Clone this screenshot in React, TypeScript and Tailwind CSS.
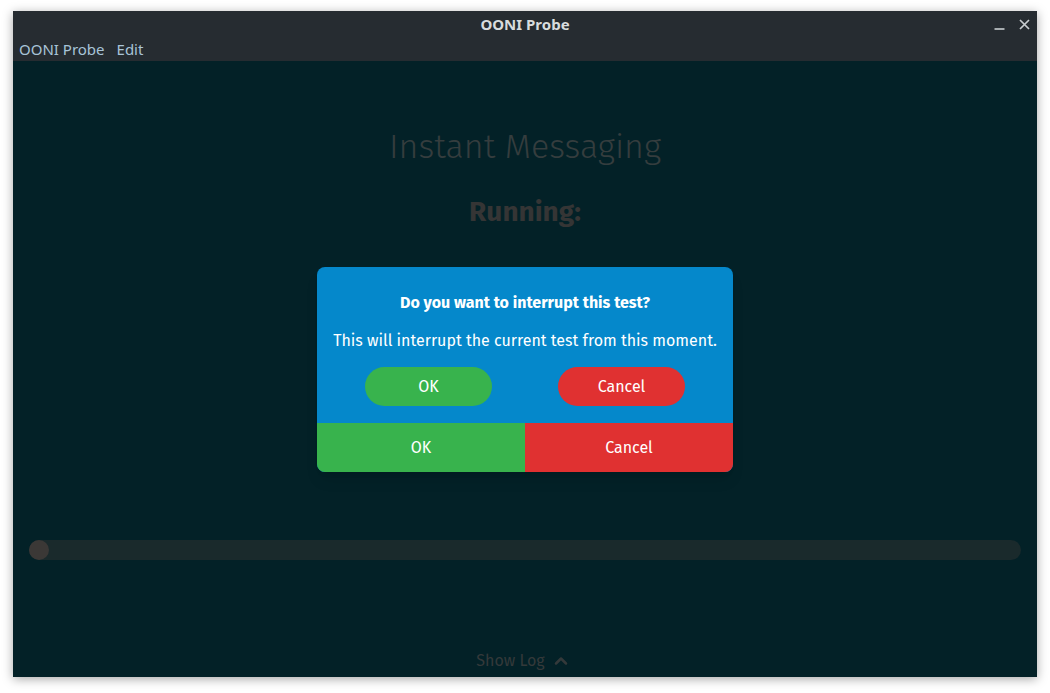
import { ChevronUp } from "lucide-react";

function TitleBar() {
  return (
    <div className="relative flex h-[26px] items-center justify-center bg-[#262c31]">
      <span className="text-[15px] font-bold text-[#d8dcde]" style={{ fontFamily: '"Noto Sans", sans-serif' }}>
        OONI Probe
      </span>
      <div className="absolute right-[7px] top-0 flex h-full items-center gap-[14px]">
        <svg width="11" height="11" viewBox="0 0 11 11">
          <path d="M0.5 10h10" stroke="#c8cdd0" strokeWidth="1.6" />
        </svg>
        <svg width="11" height="11" viewBox="0 0 11 11">
          <path d="M1 1l9 9M10 1l-9 9" stroke="#c8cdd0" strokeWidth="1.7" />
        </svg>
      </div>
    </div>
  );
}

function MenuBar() {
  return (
    <div
      className="flex h-[24px] items-center gap-[12px] bg-[#262c31] px-[6px] text-[15px] text-[#a8c4d8]"
      style={{ fontFamily: '"Noto Sans", sans-serif' }}
    >
      <span>OONI Probe</span>
      <span>Edit</span>
    </div>
  );
}

function Dialog() {
  return (
    <div className="absolute left-[304px] top-[206px] w-[416px] overflow-hidden rounded-[8px] bg-[#0588cb] shadow-lg">
      <div className="flex flex-col items-center pt-[24px]">
        <p className="text-[16px] font-bold text-white">Do you want to interrupt this test?</p>
        <p className="mt-[14px] text-[16px] text-white">
          This will interrupt the current test from this moment.
        </p>
        <div className="mt-[14px] mb-[17px] flex gap-[66px]">
          <button className="h-[39px] w-[127px] rounded-full bg-[#38b34d] text-[16px] text-white">OK</button>
          <button className="h-[39px] w-[127px] rounded-full bg-[#e03131] text-[16px] text-white">Cancel</button>
        </div>
      </div>
      <div className="flex h-[49px]">
        <button className="flex-1 bg-[#38b34d] text-[16px] text-white">OK</button>
        <button className="flex-1 bg-[#e03131] text-[16px] text-white">Cancel</button>
      </div>
    </div>
  );
}

export default function App() {
  return (
    <div
      className="h-[693px] w-[1050px] bg-white pl-[13px] pt-[11px]"
      style={{ fontFamily: '"Fira Sans", "Noto Sans", sans-serif' }}
    >
      <div className="flex h-[666px] w-[1024px] flex-col shadow-[0_2px_10px_rgba(0,0,0,0.35)]">
        <TitleBar />
        <MenuBar />
        <div className="relative flex flex-1 flex-col items-center bg-[#032127]">
          <h1 className="mt-[64px] text-[34px] font-light leading-[44px] text-[#353d3e]">Instant Messaging</h1>
          <h2 className="mt-[26px] text-[28px] font-bold leading-[34px] text-[#353535]">Running:</h2>
          <div className="mt-[311px] flex h-[20px] w-[992px] items-center rounded-full bg-[#1a2a2c]">
            <div className="h-[20px] w-[20px] rounded-full bg-[#3b3836]" />
          </div>
          <div className="mt-auto mb-[4px] flex items-center gap-[6px] pr-[3px] text-[16px] text-[#34393a]">
            <span>Show Log</span>
            <ChevronUp size={20} strokeWidth={3} />
          </div>
          <Dialog />
        </div>
      </div>
    </div>
  );
}
